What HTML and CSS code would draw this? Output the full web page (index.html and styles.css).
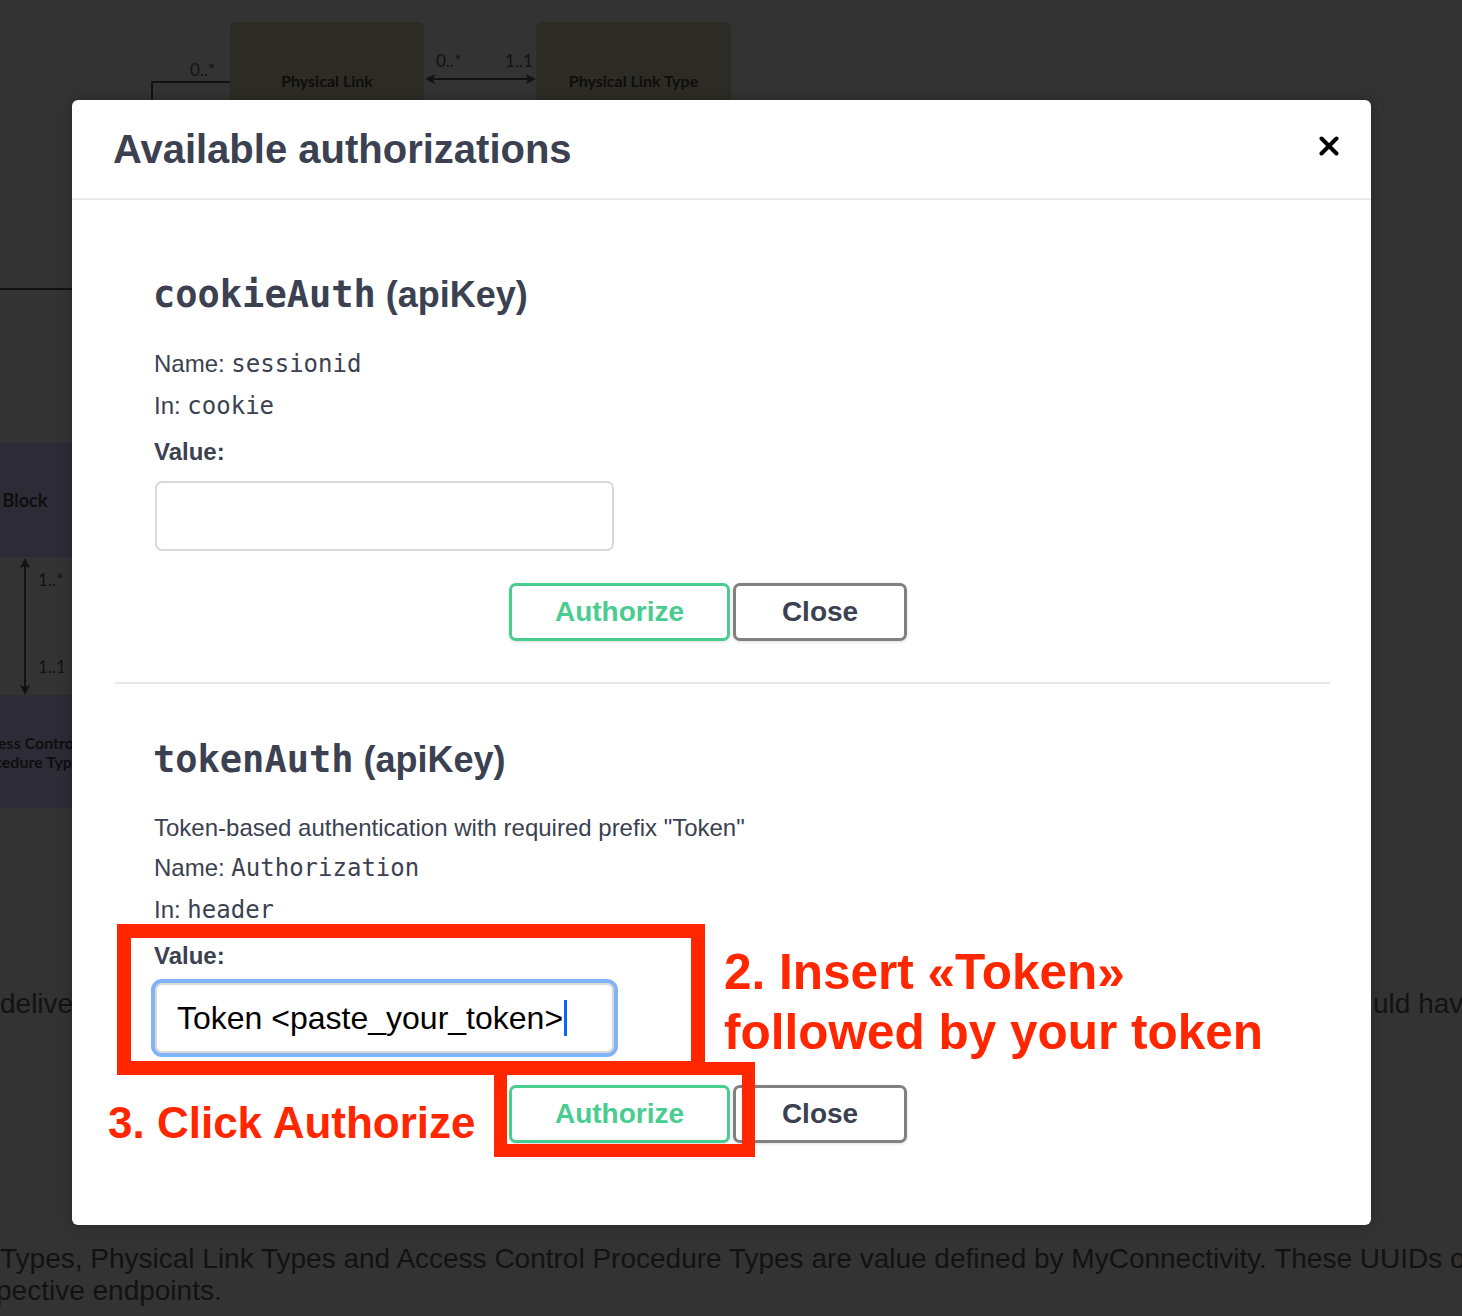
FILE: index.html
```html
<!DOCTYPE html>
<html lang="en">
<head>
    <meta charset="UTF-8">
    <meta name="viewport" content="width=device-width, initial-scale=1.0">
    <title>Available authorizations</title>
    <link rel="stylesheet" href="styles.css">
</head>
<body>
    <!-- page behind the dialog -->
    <div class="page">
        <div class="diagram">
            <svg class="edges" width="1462" height="988" viewBox="0 0 1462 988">
                <path d="M152 110 V82 H230" />
                <path d="M432 79 H529" />
                <polygon points="425,79 435,74 433,79 435,84" />
                <polygon points="536,79 526,74 528,79 526,84" />
                <path d="M0 289 H80" />
                <path d="M25 565 V688" />
                <polygon points="25,558 20,568 25,566 30,568" />
                <polygon points="25,695 20,685 25,687 30,685" />
            </svg>
            <div class="node node-link">Physical Link</div>
            <div class="node node-link-type">Physical Link Type</div>
            <div class="node node-block">Block</div>
            <div class="node node-access">Access Control<br>Procedure Type</div>
            <span class="mult mult-a">0..*</span>
            <span class="mult mult-b">0..*</span>
            <span class="mult mult-c">1..1</span>
            <span class="mult mult-d">1..*</span>
            <span class="mult mult-e">1..1</span>
        </div>
        <p class="doc-line">
            <span class="doc-clip">delivered to the customer premises and the endpoints sho</span>
            <span class="doc-rest">uld have</span>
        </p>
        <p class="doc-text">
            Types, Physical Link Types and Access Control Procedure Types are value defined by MyConnectivity. These UUIDs o
            <span class="doc-cont">pective endpoints.</span>
        </p>
    </div>

    <div class="modal">
        <div class="modal-header">
            <h3>Available authorizations</h3>
            <button class="close-modal" type="button" aria-label="Close">
                <svg width="20" height="20" viewBox="0 0 20 20">
                    <path d="M2.5 2.5 L17.5 17.5 M17.5 2.5 L2.5 17.5" />
                </svg>
            </button>
        </div>

        <div class="modal-body">
            <div class="auth-container">
                <h4><code>cookieAuth</code> (apiKey)</h4>
                <p class="auth-line">Name: <code>sessionid</code></p>
                <p class="auth-line">In: <code>cookie</code></p>
                <p class="auth-label">Value:</p>
                <div class="auth-input"></div>
                <div class="auth-btn-wrapper">
                    <button class="btn btn-authorize" type="button">Authorize</button>
                    <button class="btn btn-done" type="button">Close</button>
                </div>
            </div>

            <div class="auth-container">
                <h4><code>tokenAuth</code> (apiKey)</h4>
                <p class="auth-desc">Token-based authentication with required prefix "Token"</p>
                <p class="auth-line">Name: <code>Authorization</code></p>
                <p class="auth-line">In: <code>header</code></p>
                <p class="auth-label">Value:</p>
                <div class="auth-input is-focused">Token &lt;paste_your_token&gt;<span class="caret"></span></div>
                <div class="auth-btn-wrapper">
                    <button class="btn btn-authorize" type="button">Authorize</button>
                    <button class="btn btn-done" type="button">Close</button>
                </div>
            </div>
        </div>
    </div>

    <!-- annotations drawn over the screenshot -->
    <div class="mark mark-value"></div>
    <div class="mark mark-authorize"></div>
    <p class="note note-insert">2. Insert «Token»<br>followed by your token</p>
    <p class="note note-click">3. Click Authorize</p>
</body>
</html>
```

FILE: styles.css
```css
* {
    box-sizing: border-box;
}

html,
body {
    margin: 0;
}

body {
    position: relative;
    width: 1462px;
    height: 1316px;
    overflow: hidden;
    background: #333333;
    font-family: "Liberation Sans", Arial, sans-serif;
}

/* background page */

.diagram {
    position: relative;
    height: 988px;
}

.edges {
    position: absolute;
    left: 0;
    top: 0;
}

.edges path {
    fill: none;
    stroke: #121212;
    stroke-width: 2;
}

.edges polygon {
    fill: #121212;
}

.node {
    position: absolute;
    display: flex;
    align-items: center;
    justify-content: center;
    text-align: center;
    border-radius: 6px;
    font-family: Lato, "Liberation Sans", sans-serif;
    font-weight: 700;
    font-size: 16px;
    line-height: 19px;
    color: #0e0e0e;
    white-space: nowrap;
}

.node-link {
    left: 230px;
    top: 22px;
    width: 194px;
    height: 116px;
    background: #2c2b24;
}

.node-link-type {
    left: 536px;
    top: 22px;
    width: 195px;
    height: 116px;
    background: #2c2b24;
}

.node-block {
    left: -72px;
    top: 443px;
    width: 194px;
    height: 114px;
    background: #2d2c36;
    font-size: 18px;
}

.node-access {
    left: -72px;
    top: 695px;
    width: 194px;
    height: 113px;
    background: #2d2c36;
}

.mult {
    position: absolute;
    font-family: Lato, "Liberation Sans", sans-serif;
    font-size: 17px;
    line-height: 18px;
    color: #121212;
}

.mult-a { left: 190px; top: 61px; }
.mult-b { left: 436px; top: 52px; }
.mult-c { left: 505px; top: 52px; }
.mult-d { left: 38px; top: 571px; }
.mult-e { left: 38px; top: 658px; }

.doc-line {
    display: flex;
    margin: 0;
    white-space: nowrap;
    font-size: 28px;
    line-height: 32px;
    color: #121212;
}

.doc-clip {
    flex: 0 0 1373px;
    overflow: hidden;
}

.doc-rest {
    flex: 0 0 auto;
}

.doc-text {
    margin: 223px 0 0;
    white-space: nowrap;
    font-size: 28px;
    line-height: 32px;
    color: #121212;
}

.doc-cont {
    display: block;
    margin-left: -4px;
}

/* dialog */

.modal {
    position: absolute;
    left: 72px;
    top: 100px;
    width: 1299px;
    height: 1125px;
    background: #ffffff;
    border-radius: 6px;
    box-shadow: 0 0 14px rgba(0, 0, 0, 0.25);
    color: #3b4151;
}

.modal-header {
    display: flex;
    align-items: center;
    justify-content: space-between;
    height: 100px;
    padding: 0 32px 0 41px;
    border-bottom: 2px solid #ebebeb;
}

.modal-header h3 {
    margin: 0;
    font-size: 40px;
    line-height: 48px;
    font-weight: 700;
}

.close-modal {
    display: flex;
    margin-bottom: 6px;
    padding: 0;
    border: none;
    background: none;
}

.close-modal path {
    stroke: #000000;
    stroke-width: 4;
    stroke-linecap: round;
    fill: none;
}

.modal-body {
    padding: 19px 41px 0 43px;
}

.auth-container {
    padding: 54px 40px 41px;
    border-bottom: 2px solid #e8e8e8;
}

.auth-container:last-child {
    border-bottom: none;
}

.auth-container h4 {
    margin: 0 0 26px -2px;
    font-size: 36px;
    line-height: 44px;
    font-weight: 700;
}

.auth-container h4 code {
    font-family: "DejaVu Sans Mono", monospace;
    font-size: 37px;
    font-weight: 700;
}

.auth-desc {
    margin: 0 0 0 -1px;
    font-size: 24px;
    line-height: 39px;
}

.auth-line {
    margin: 0 0 0 -1px;
    font-size: 24px;
    line-height: 41px;
}

.auth-line code {
    font-family: "DejaVu Sans Mono", monospace;
    font-size: 24px;
}

.auth-label {
    margin: 4px 0 0 -1px;
    font-size: 24px;
    line-height: 42px;
    font-weight: 700;
}

.auth-input {
    display: flex;
    align-items: center;
    margin-top: 8px;
    width: 459px;
    height: 70px;
    padding: 0 20px;
    border: 2px solid #d9d9d9;
    border-radius: 7px;
    background: #ffffff;
    font-size: 32px;
    color: #000000;
}

.auth-input.is-focused {
    margin-top: 6px;
    outline: 4px solid #80b3f8;
    outline-offset: 0;
}

.caret {
    display: inline-block;
    width: 3px;
    height: 36px;
    margin-left: 1px;
    background: #0b66f5;
}

.auth-btn-wrapper {
    display: flex;
    justify-content: center;
    gap: 3px;
    margin-top: 32px;
}

.btn {
    height: 58px;
    padding: 0;
    border-radius: 7px;
    background: #ffffff;
    font-family: "Liberation Sans", Arial, sans-serif;
    font-size: 28px;
    font-weight: 700;
    box-shadow: 0 1px 3px rgba(0, 0, 0, 0.15);
}

.btn-authorize {
    width: 221px;
    border: 3px solid #49cc90;
    color: #49cc90;
}

.btn-done {
    width: 174px;
    margin-right: 29px;
    border: 3px solid #808080;
    color: #3b4151;
}

/* annotations */

.mark {
    position: absolute;
    border: 14px solid #ff2600;
}

.mark-value {
    left: 117px;
    top: 924px;
    width: 588px;
    height: 151px;
}

.mark-authorize {
    left: 494px;
    top: 1062px;
    width: 261px;
    height: 95px;
    border-width: 13px;
}

.note {
    position: absolute;
    margin: 0;
    color: #ff2600;
    font-weight: 700;
    white-space: nowrap;
}

.note-insert {
    left: 724px;
    top: 942px;
    font-size: 49.5px;
    line-height: 60px;
}

.note-click {
    left: 108px;
    top: 1095px;
    font-size: 44px;
    line-height: 56px;
}
```
